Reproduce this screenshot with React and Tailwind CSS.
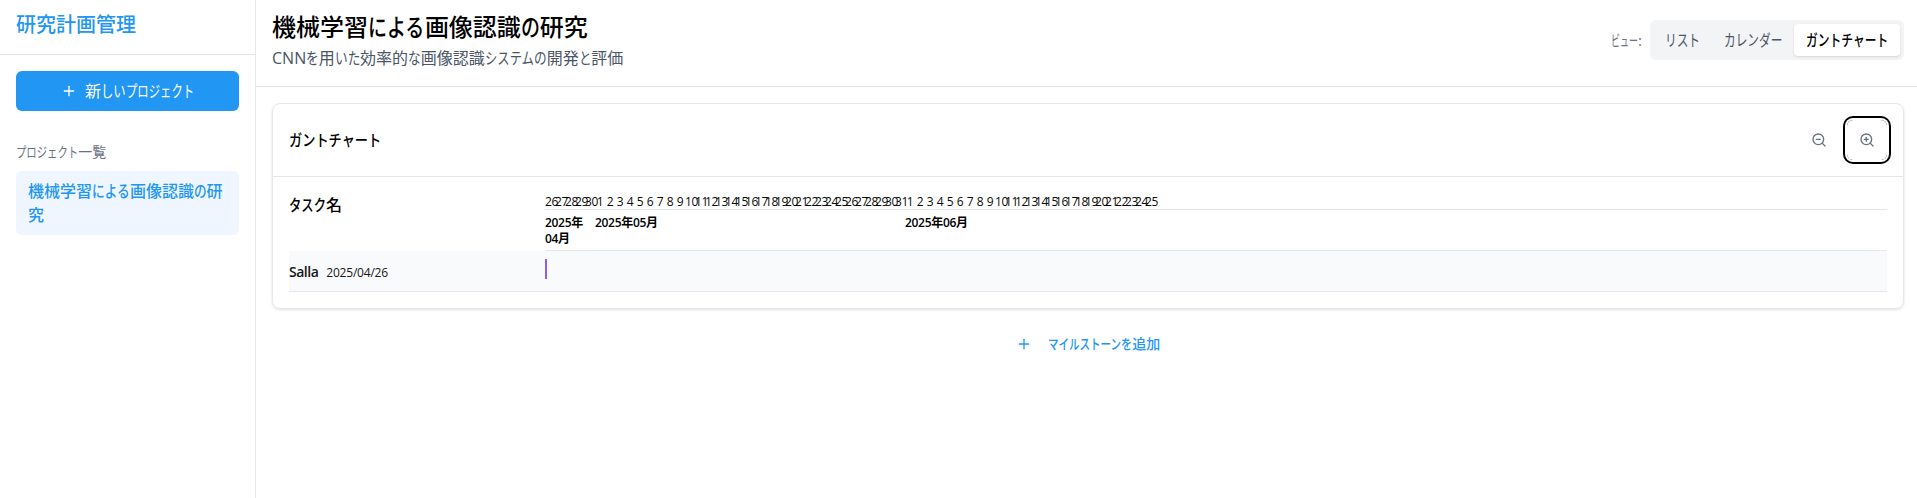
import { Plus, ZoomIn, ZoomOut } from "lucide-react";

// Sets runs of kana narrower than kanji; `hira` and `kata` are widths per character in em.
function Ja({ children, hira = 0.79, kata = 0.75 }) {
  const runs = children.match(/[\u3040-\u309f]+|[\u30a0-\u30ff]+|[^\u3040-\u30ff]+/g);
  return runs.map((run, i) => {
    const isKana = /[\u3040-\u30ff]/.test(run);
    if (!isKana) return <span key={i}>{run}</span>;
    const k = /[\u3040-\u309f]/.test(run) ? hira : kata;
    return (
      <span key={i} className="inline-block whitespace-nowrap text-left" style={{ width: `${run.length * k}em` }}>
        <span className="inline-block origin-left" style={{ transform: `scaleX(${k})` }}>{run}</span>
      </span>
    );
  });
}

const range = (from, to) => Array.from({ length: to - from + 1 }, (_, i) => from + i);
const days = [...range(26, 30), ...range(1, 31), ...range(1, 25)];

function Sidebar() {
  return (
    <aside className="w-64 shrink-0 border-r border-gray-200">
      <div className="h-[55px] border-b border-gray-200 px-4 pt-[11px]">
        <h1 className="text-xl font-medium text-[#2196f3]">研究計画管理</h1>
      </div>
      <div className="px-4 pt-4">
        <button className="flex h-10 w-full items-center justify-center gap-2 rounded-md bg-[#2196f3] text-base text-white">
          <Plus className="size-4" strokeWidth={2} />
          <span><Ja kata={0.71} hira={0.77}>新しいプロジェクト</Ja></span>
        </button>
        <h2 className="mt-[31px] text-sm text-gray-500"><Ja kata={0.74}>プロジェクト一覧</Ja></h2>
        <div className="mt-[9px] h-16 rounded-md bg-[#eff6ff] px-3 py-2 text-base font-medium text-[#2196f3]">
          <Ja>機械学習による画像認識の研究</Ja>
        </div>
      </div>
    </aside>
  );
}

function Header() {
  return (
    <header className="flex h-[87px] items-start justify-between border-b border-gray-200 pl-4 pr-[13px]">
      <div className="pt-[11px]">
        <h2 className="h-8 text-2xl font-medium text-black"><Ja>機械学習による画像認識の研究</Ja></h2>
        <p className="mt-[3px] text-base text-gray-600"><Ja kata={0.77}>CNNを用いた効率的な画像認識システムの開発と評価</Ja></p>
      </div>
      <div className="mt-5 flex items-center gap-2">
        <span className="text-[15px] text-gray-500"><Ja kata={0.6}>ビュー:</Ja></span>
        <div className="flex h-10 w-[254px] items-center rounded-md bg-gray-100 p-1 text-base text-gray-600">
          <button className="h-8 w-[58px]"><Ja kata={0.73}>リスト</Ja></button>
          <button className="h-8 w-[82px]"><Ja kata={0.73}>カレンダー</Ja></button>
          <button className="h-8 w-[106px] rounded bg-white font-medium text-black shadow-sm"><Ja kata={0.735}>ガントチャート</Ja></button>
        </div>
      </div>
    </header>
  );
}

function Gantt() {
  return (
    <section className="rounded-lg border border-gray-200 shadow-sm">
      <div className="flex h-[73px] items-center justify-between border-b border-gray-200 px-4">
        <h3 className="text-base font-medium text-black"><Ja kata={0.825}>ガントチャート</Ja></h3>
        <div className="flex gap-2 text-gray-500">
          <button className="flex size-10 items-center justify-center rounded-md"><ZoomOut className="size-4" /></button>
          <button className="flex size-10 items-center justify-center rounded-md ring-2 ring-black ring-offset-2"><ZoomIn className="size-4" /></button>
        </div>
      </div>
      <div className="p-4">
        <div className="flex">
          <div className="w-64 shrink-0 text-base font-medium text-black"><Ja kata={0.77}>タスク名</Ja></div>
          <div className="flex-1 text-xs text-neutral-950">
            <div className="flex h-[17px] border-b border-gray-200 tracking-[-0.4px]">
              {days.map((day, i) => (
                <div key={i} className="w-2.5 shrink-0 pt-px text-center">{day}</div>
              ))}
            </div>
            <div className="flex h-[41px] border-b border-gray-200 py-1 font-semibold tracking-[-0.3px] text-black">
              <div className="w-[50px] shrink-0 pt-px">2025年<br />04月</div>
              <div className="w-[310px] shrink-0 pt-px">2025年05月</div>
              <div className="w-[250px] shrink-0 pt-px">2025年06月</div>
            </div>
          </div>
        </div>
        <div className="flex h-[41px] border-b border-gray-200 bg-[#f9fafb]">
          <div className="flex w-64 shrink-0 items-baseline gap-2 pt-[11px]">
            <span className="text-sm leading-5 font-semibold tracking-[-0.5px] text-neutral-900">Salla</span>
            <span className="text-xs tracking-[-0.2px] text-neutral-900">2025/04/26</span>
          </div>
          <div className="mt-2 h-5 w-0.5 bg-[#8b5cf6]" />
        </div>
      </div>
    </section>
  );
}

export default function App() {
  return (
    <div className="flex h-screen overflow-hidden bg-white font-['Open_Sans','Noto_Sans_CJK_JP',sans-serif]">
      <Sidebar />
      <main className="min-w-0 flex-1">
        <Header />
        <div className="pt-4 pr-[13px] pl-4">
          <Gantt />
          <div className="mt-[15px] flex justify-center">
            <button className="flex h-10 items-center gap-4 text-sm font-medium text-[#2196f3]">
              <Plus className="size-4" strokeWidth={2} />
              <span><Ja>マイルストーンを追加</Ja></span>
            </button>
          </div>
        </div>
      </main>
    </div>
  );
}
